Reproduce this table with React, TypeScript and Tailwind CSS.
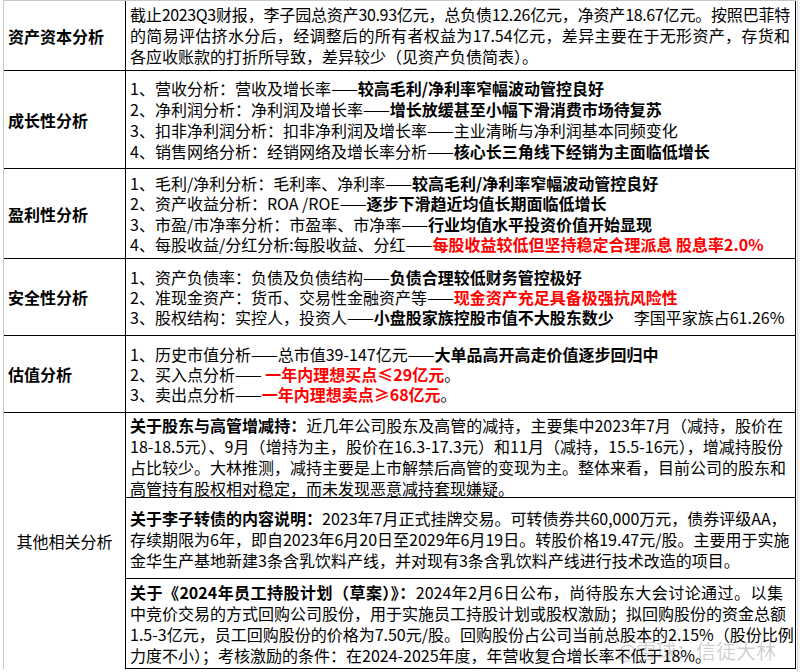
import type { ReactNode } from "react";

const B = ({ children }: { children: ReactNode }) => <span className="font-bold">{children}</span>;
const R = ({ children }: { children: ReactNode }) => <span className="font-bold text-[#ff0000]">{children}</span>;

// one justified line of a paragraph cell
const J = ({ children, tight }: { children: ReactNode; tight?: boolean }) => (
  <div className={`whitespace-nowrap text-justify [text-align-last:justify] ${tight ? "tracking-[-0.35px]" : ""}`}>
    {children}
  </div>
);
const L = ({ children }: { children: ReactNode }) => <div className="whitespace-nowrap">{children}</div>;

function Row({ label, h, lh, children }: { label: string; h: string; lh: string; children: ReactNode }) {
  return (
    <div className={`grid grid-cols-[122px_minmax(0,1fr)] border-b border-black ${h}`}>
      <div className="flex items-center border-r border-black pl-[4px] text-[16px] font-bold">{label}</div>
      <div className={`flex min-w-0 flex-col justify-center border-r border-black pl-[4px] pr-[5px] text-[16px] ${lh}`}>
        {children}
      </div>
    </div>
  );
}

export default function App() {
  return (
    <div className="relative h-[672px] w-[800px] overflow-hidden bg-white font-['Noto_Sans_CJK_SC',sans-serif] text-black">
      {/* excel grid remnants */}
      <div className="absolute right-0 top-0 h-full w-[3px] border-l border-[#d4d4d4] bg-[#f3f3f3]" />

      <div className="ml-[3px] w-[793px] border-l border-t border-[#c8c8c8]">
        <Row label="资产资本分析" h="h-[70px]" lh="leading-[21px]">
          <J tight>截止2023Q3财报，李子园总资产30.93亿元，总负债12.26亿元，净资产18.67亿元。按照巴菲特</J>
          <J>的简易评估挤水分后，经调整后的所有者权益为17.54亿元，差异主要在于无形资产，存货和</J>
          <L>各应收账款的打折所导致，差异较少（见资产负债简表）。</L>
        </Row>

        <Row label="成长性分析" h="h-[98px]" lh="leading-[21px]">
          <L>1、营收分析：营收及增长率——<B>较高毛利/净利率窄幅波动管控良好</B></L>
          <L>2、净利润分析：净利润及增长率——<B>增长放缓甚至小幅下滑消费市场待复苏</B></L>
          <L>3、扣非净利润分析：扣非净利润及增长率——主业清晰与净利润基本同频变化</L>
          <L>4、销售网络分析：经销网络及增长率分析——<B>核心长三角线下经销为主面临低增长</B></L>
        </Row>

        <Row label="盈利性分析" h="h-[90px]" lh="leading-[20.5px]">
          <L>1、毛利/净利分析：毛利率、净利率——<B>较高毛利/净利率窄幅波动管控良好</B></L>
          <L>2、资产收益分析：ROA /ROE——<B>逐步下滑趋近均值长期面临低增长</B></L>
          <L>3、市盈/市净率分析：市盈率、市净率——<B>行业均值水平投资价值开始显现</B></L>
          <L>4、每股收益/分红分析:每股收益、分红——<R>每股收益较低但坚持稳定合理派息 股息率2.0%</R></L>
        </Row>

        <Row label="安全性分析" h="h-[77px]" lh="leading-[20px]">
          <L>1、资产负债率：负债及负债结构——<B>负债合理较低财务管控极好</B></L>
          <L>2、准现金资产：货币、交易性金融资产等——<R>现金资产充足具备极强抗风险性</R></L>
          <L>
            3、股权结构：实控人，投资人——<B>小盘股家族控股市值不大股东数少</B>
            <span className="ml-[20px]">李国平家族占61.26%</span>
          </L>
        </Row>

        <Row label="估值分析" h="h-[77px]" lh="leading-[20px]">
          <L>1、历史市值分析——总市值39-147亿元——<B>大单品高开高走价值逐步回归中</B></L>
          <L>2、买入点分析—— <R>一年内理想买点≤29亿元</R>。</L>
          <L>3、卖出点分析——<R>一年内理想卖点≥68亿元</R>。</L>
        </Row>

        <div className="grid grid-cols-[122px_minmax(0,1fr)]">
          <div className="flex items-center justify-center border-r border-black text-[16px]">其他相关分析</div>
          <div className="flex min-w-0 flex-col border-r border-black text-[16px] leading-[21px]">
            <div className="flex h-[85px] flex-col justify-center border-b border-black pl-[4px] pr-[12px] pt-[3px]">
              <J><B>关于股东与高管增减持：</B>近几年公司股东及高管的减持，主要集中2023年7月（减持，股价在</J>
              <J>18-18.5元）、9月（增持为主，股价在16.3-17.3元）和11月（减持，15.5-16元），增减持股份</J>
              <J>占比较少。大林推测，减持主要是上市解禁后高管的变现为主。整体来看，目前公司的股东和</J>
              <L>高管持有股权相对稳定，而未发现恶意减持套现嫌疑。</L>
            </div>
            <div className="flex h-[81px] flex-col justify-center border-b border-black pl-[4px] pr-[12px] pt-[3px]">
              <L><B>关于李子转债的内容说明：</B>2023年7月正式挂牌交易。可转债券共60,000万元，债券评级AA，</L>
              <J>存续期限为6年，即自2023年6月20日至2029年6月19日。转股价格19.47元/股。主要用于实施</J>
              <L>金华生产基地新建3条含乳饮料产线，并对现有3条含乳饮料产线进行技术改造的项目。</L>
            </div>
            <div className="flex h-[90px] flex-col justify-center border-b border-black pl-[4px] pr-[12px]">
              <J><B>关于《2024年员工持股计划（草案）》：</B>2024年2月6日公布，尚待股东大会讨论通过。以集</J>
              <J>中竞价交易的方式回购公司股份，用于实施员工持股计划或股权激励；拟回购股份的资金总额</J>
              <J>1.5-3亿元，员工回购股份的价格为7.50元/股。回购股份占公司当前总股本的2.15%（股份比例</J>
              <L>力度不小）；考核激励的条件：在2024-2025年度，年营收复合增长率不低于18%。</L>
            </div>
          </div>
        </div>
      </div>

      {/* watermark */}
      <div className="pointer-events-none absolute bottom-[6px] right-[24px] text-[20px] text-black/20">@雪球：信徒大林</div>
    </div>
  );
}
